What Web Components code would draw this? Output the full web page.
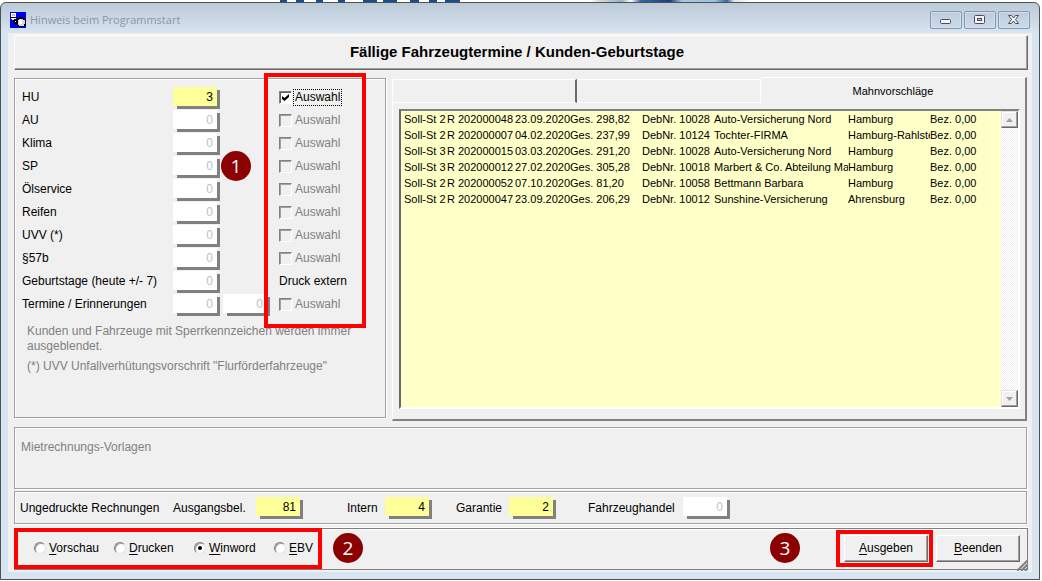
<!DOCTYPE html>
<html lang="de">
<head>
<meta charset="utf-8">
<title>Hinweis beim Programmstart</title>
<style>
html,body{margin:0;height:100%}
body{background:#fff;font:12px/16px "Liberation Sans",Arial,sans-serif;color:#000;--face:#f0f0f0;overflow:hidden}
</style>
</head>
<body>
<start-dialog></start-dialog>
<script>
function define(name, html, init){
  const t=document.createElement('template');
  t.innerHTML=html;
  customElements.define(name,class extends HTMLElement{
    connectedCallback(){
      if(this.shadowRoot)return;
      this.attachShadow({mode:'open'}).append(t.content.cloneNode(true));
      if(init)init(this,this.shadowRoot);
    }
  });
}

/* Numbered callout disc */
define('call-out',`<style>
:host{display:flex;align-items:center;justify-content:center;width:30px;height:30px;border-radius:50%;background:#8b0000;color:#fff;font:19px/30px "Open Sans","Noto Sans",sans-serif}
</style><slot></slot>`);

/* Count field with hard drop shadow */
define('count-field',`<style>
:host{display:block;width:44px;height:22px;position:relative}
:host::before{content:"";position:absolute;left:4px;top:3px;right:-3px;bottom:0;background:#808080}
input{position:relative;display:block;box-sizing:border-box;width:44px;height:19px;margin:0;border:0;padding:0 4px;font:inherit;text-align:right;background:#fff;color:#c0c0c0;border-radius:0;outline:0}
:host([filled]) input{background:#ffff99;color:#000}
</style><input readonly>`,(h,r)=>{
  const i=r.querySelector('input');
  i.value=h.getAttribute('value');
  i.setAttribute('aria-label',h.getAttribute('label'));
});

/* Sunken tick box with caption */
define('tick-box',`<style>
:host{display:block}
label{display:flex;align-items:center;gap:1px;color:#808080}
input{appearance:none;flex:none;box-sizing:border-box;width:13px;height:13px;margin:0;border:1px solid;border-color:#808080 #fff #fff #808080;box-shadow:inset 1px 1px 0 #a0a0a0;display:grid;place-items:center}
input:checked{background:#fff;box-shadow:inset 1px 1px 0 #606060}
input:checked::after{content:"";width:9px;height:9px;background:#000;clip-path:polygon(11% 33%,39% 56%,89% 11%,89% 44%,39% 89%,11% 67%)}
span{padding:0 1px;border:1px solid transparent;line-height:15px}
:host([checked]) label{color:#000}
:host([checked]) span{border:1px dotted #000}
</style><label><input type="checkbox"><span><slot></slot></span></label>`,(h,r)=>{
  const i=r.querySelector('input');
  i.checked=h.hasAttribute('checked');
  i.disabled=!i.checked;
});

/* Radio group */
define('output-choice',`<style>
:host{display:flex;align-items:center}
label{display:flex;align-items:center;gap:3px;width:80px}
input{appearance:none;box-sizing:border-box;width:12px;height:12px;margin:0;border:1px solid;border-color:#808080 #e3e3e3 #e3e3e3 #808080;border-radius:50%;background:#fff;box-shadow:inset 1px 1px 0 #a0a0a0;display:grid;place-items:center}
input:checked::after{content:"";width:4px;height:4px;border-radius:50%;background:#000}
label:last-child{width:auto}
u{text-underline-offset:2px}
</style>
<label><input type="radio" name="o"><span><u>V</u>orschau</span></label>
<label><input type="radio" name="o"><span><u>D</u>rucken</span></label>
<label><input type="radio" name="o" checked><span><u>W</u>inword</span></label>
<label><input type="radio" name="o"><span><u>E</u>BV</span></label>`);

/* Raised push button */
define('push-button',`<style>
:host{display:block}
button{display:block;box-sizing:border-box;width:84px;height:27px;margin:0;padding:0;font:inherit;color:#000;background:var(--face);border:1px solid;border-color:#fff #696969 #696969 #fff;box-shadow:inset -1px -1px 0 #a0a0a0;border-radius:0}
</style><button type="button"><slot></slot></button>`);

/* Etched group frame */
define('group-frame',`<style>
:host{display:block;box-sizing:border-box;border:1px solid #a0a0a0;box-shadow:inset 1px 1px 0 #fff,1px 1px 0 #fff}
</style><slot></slot>`);

/* Title bar */
define('title-bar',`<style>
:host{display:flex;align-items:center;box-sizing:border-box;height:30px;padding:4px 9px 0;color:#8f969e;font:11px/16px "Open Sans","Noto Sans",sans-serif}
svg{display:block}
.ico{margin-right:4px}
h1{flex:1;margin:0;font:inherit}
.b{display:flex;gap:2px}
button{display:flex;align-items:center;justify-content:center;box-sizing:border-box;width:32px;height:18px;padding:0;border:1px solid #8497b0;border-radius:2px;background:linear-gradient(#bccbdb,#cddaea);box-shadow:inset 0 0 0 1px #d3e0ee}
</style>
<svg class="ico" width="16" height="16" viewBox="0 0 16 16" shape-rendering="crispEdges"><path fill="#0000f0" d="M0 0h16v16H0z"/><path fill="#fff" d="M1 1h5v1H1zM1 2h1v3H1zM5 2h1v3H5zM2 4h3v1H2z"/><path fill="#c0c0c0" d="M2 2h3v2H2z"/><path fill="#000" d="M0 5h7v1H0zM3 8h5v1H3zM4 9h3v3H4zM6 11h2v2H6zM14 13h2v1h-2z"/><path fill="#fff" d="M1 6h5v1H1zM5 9h2v1H5zM2 7h2v1H2z"/><path fill="#000" d="M9 5h4v1h2v2h1v5h-1v1h-2v1H9v-1H7v-3H6V8h1V6h2z"/><path fill="#d8d8d8" d="M9 7h4v1h2v4h-1v2H9v-1H8V8h1z"/><path fill="#fff" d="M9 8h3v4H9z"/><path fill="#000" d="M9 6h1v1H9zM12 6h1v1h-1z"/></svg>
<h1>Hinweis beim Programmstart</h1>
<div class="b">
<button aria-label="Minimieren"><svg width="12" height="12"><rect x=".5" y="5.500" width="10" height="4" rx="1" fill="#f4f4f4" stroke="#4a4d5c"/></svg></button>
<button aria-label="Maximieren"><svg width="12" height="12"><rect x=".5" y="1.500" width="10" height="8" rx="1" fill="#f4f4f4" stroke="#4a4d5c"/><rect x="3.500" y="4.500" width="4" height="2" fill="#b9c8d8" stroke="#4a4d5c"/></svg></button>
<button aria-label="Schließen"><svg width="12" height="12"><path d="M.5 1.500h3L5.500 4l2-2.500h3L7.500 5.500l3 4h-3L5.500 7l-2 2.500h-3l3-4z" fill="#f4f4f4" stroke="#4a4d5c"/></svg></button>
</div>`);

/* Due dates panel */
define('due-list',`<style>
:host{display:block;padding:8px 7px 0}
.g{position:relative;display:grid;grid-template-columns:151px 50px 56px 1fr;grid-auto-rows:23px;align-items:start}
.g>span,tick-box{margin-top:2px}
.g>span{white-space:nowrap}
tick-box{grid-column:4}
.w{grid-column:4}
.mark{position:absolute;left:242px;top:-14px;width:102px;height:255px;box-sizing:border-box;border:4px solid #f00}
call-out{position:absolute;left:199px;top:64px}
p{margin:7px 0 5px 5px;line-height:15px;color:#808080;max-width:340px}
p+p{margin:0 0 0 5px}
</style><div class="g"></div>
<p>Kunden und Fahrzeuge mit Sperrkennzeichen werden immer ausgeblendet.</p><p>(*) UVV Unfallverhütungsvorschrift "Flurförderfahrzeuge"</p>`,(h,r)=>{
  const names=['HU','AU','Klima','SP','Ölservice','Reifen','UVV (*)','§57b','Geburtstage (heute +/- 7)','Termine / Erinnerungen'];
  r.querySelector('.g').innerHTML=names.map((n,i)=>`<span>${n}</span><count-field label="${n}" ${i?'value="0"':'value="3" filled'}></count-field>`+
    (i==9?`<count-field label="Erinnerungen" value="0"></count-field>`:'')+
    (i==8?'<span class="w">Druck extern</span>':`<tick-box ${i?'':'checked'}>Auswahl</tick-box>`)).join('')+'<div class="mark"></div><call-out>1</call-out>';
});

/* Tab sheet with the reminder list */
define('reminder-tabs',`<style>
:host{display:flex;flex-direction:column}
.tabs{display:flex;height:25px;align-items:flex-end}
.t{box-sizing:border-box;height:24px;flex:183 1 0;border:1px solid #fff;border-width:1px 0 1px 1px;border-radius:3px 0 0 0;padding:0;background:none;margin:0}
.t.a{border-right:2px solid #696969}
.t.b{border-left:0;border-right:1px solid #fff}
.t.s{height:26px;flex:265 1 0;font:11px/22px "Liberation Sans",Arial,sans-serif;color:#000;border-width:1px 2px 0 0;border-right-color:#808080;border-radius:0}
.sheet{flex:1;display:flex;border:solid;border-width:0 2px 2px 1px;border-color:#fff #808080 #808080 #fff;padding:6px 5px 10px 6px}
.box{flex:1;display:flex;box-sizing:border-box;border:2px solid;border-color:#808080 #fff #fff #696969;background:#ffffc8;overflow:hidden}
.rows{flex:1;min-width:0}
table{border-collapse:collapse;table-layout:fixed;width:100%;font-size:11px;line-height:16px}
td{padding:0;white-space:nowrap;overflow:hidden}
td:first-child{padding-left:3px}
.sb{width:17px;display:flex;flex-direction:column;justify-content:space-between;background:repeating-conic-gradient(#fff 0 25%,#f0f0f0 0 50%) 0 0/2px 2px}
.sb button{width:17px;height:17px;padding:0;display:grid;place-items:center;background:var(--face);border:1px solid;border-color:#e3e3e3 #696969 #696969 #e3e3e3;box-shadow:inset -1px -1px 0 #a0a0a0,inset 1px 1px 0 #fff;border-radius:0}
</style>
<div class="tabs" role="tablist"><button class="t a" role="tab" aria-label="Liste 1"></button><button class="t b" role="tab" aria-label="Liste 2"></button><button class="t s" role="tab" aria-selected="true">Mahnvorschläge</button></div>
<div class="sheet"><div class="box"><div class="rows"><table><colgroup><col style="width:46px"><col style="width:68px"><col style="width:55px"><col style="width:72px"><col style="width:72px"><col style="width:134px"><col style="width:82px"><col></colgroup><tbody></tbody></table></div>
<div class="sb"><button aria-label="Nach oben"><svg width="7" height="4"><path fill="#a0a0a0" d="M0 4 3.500 0 7 4z"/></svg></button><button aria-label="Nach unten"><svg width="7" height="4"><path fill="#a0a0a0" d="M0 0h7L3.500 4z"/></svg></button></div></div></div>`,(h,r)=>{
  r.querySelector('tbody').innerHTML=[
   ['Soll-St 2','R 202000048','23.09.2020','298,82','10028','Auto-Versicherung Nord','Hamburg'],
   ['Soll-St 2','R 202000007','04.02.2020','237,99','10124','Tochter-FIRMA','Hamburg-Rahlste'],
   ['Soll-St 3','R 202000015','03.03.2020','291,20','10028','Auto-Versicherung Nord','Hamburg'],
   ['Soll-St 3','R 202000012','27.02.2020','305,28','10018','Marbert &amp; Co. Abteilung Mas','Hamburg'],
   ['Soll-St 2','R 202000052','07.10.2020','81,20','10058','Bettmann Barbara','Hamburg'],
   ['Soll-St 2','R 202000047','23.09.2020','206,29','10012','Sunshine-Versicherung','Ahrensburg']
  ].map(a=>`<tr><td>${a[0]}<td>${a[1]}<td>${a[2]}<td>Ges. ${a[3]}<td>DebNr. ${a[4]}<td>${a[5]}<td>${a[6]}<td>Bez. 0,00</tr>`).join('');
});

/* Unprinted invoices */
define('invoice-counts',`<style>
:host{display:flex;align-items:flex-start;padding:5px}
span{margin-top:3px;white-space:nowrap}
.a{flex:0 0 153px}
.b{flex:0 0 83px}
.c{flex:0 0 38px;margin-left:47px}
.d{flex:0 0 53px;margin-left:27px}
.e{flex:0 0 95px;margin-left:35px}
</style>
<span class="a">Ungedruckte Rechnungen</span><span class="b">Ausgangsbel.</span><count-field label="Ausgangsbel." value="81" filled></count-field>
<span class="c">Intern</span><count-field label="Intern" value="4" filled></count-field>
<span class="d">Garantie</span><count-field label="Garantie" value="2" filled></count-field>
<span class="e">Fahrzeughandel</span><count-field label="Fahrzeughandel" value="0"></count-field>`);

/* Bottom action bar */
define('action-bar',`<style>
:host{position:relative;display:flex;align-items:center;box-sizing:border-box;height:42px;border:1px solid #808080;box-shadow:inset 1px 1px 0 #fff,0 -1px 0 #fff;padding:0 7px 2px 0}
.l,.r{box-sizing:border-box;border:4px solid #f00;margin-left:-1px;display:flex;align-items:center}
.l{width:308px;height:41px;padding-left:16px;margin-right:11px}
.r{height:37px;margin:0 3px 0 36px;padding-left:4px;width:97px}
.s{flex:1}
svg{position:absolute;right:-1px;bottom:-2px}
u{text-underline-offset:2px}
</style>
<div class="l"><output-choice></output-choice></div><call-out>2</call-out><div class="s"></div><call-out>3</call-out>
<div class="r"><push-button><u>A</u>usgeben</push-button></div><push-button><u>B</u>eenden</push-button>
<svg width="11" height="11"><path d="M0 11 11 0M4 11l7-7M8 11l3-3" stroke="#808080" stroke-width="2"/></svg>`);

define('start-dialog',`<style>
:host{display:flex;flex-direction:column;box-sizing:border-box;height:100vh;padding:2px 2px 1px 0;background:linear-gradient(90deg,transparent 590px,#d8d8d0 600px,#8fb4cc 622px,#fff 631px,#2f66a8 641px,#1c3f80 670px,#a4c8de 682px,#9cc4dc 715px,#2a68a8 727px,#e4e0d4 734px,#fff 750px) 0 0/100% 2px no-repeat,linear-gradient(90deg,#fff 280px,#174f8c 280px 287px,#fff 287px 296px,#174f8c 296px 304px,#fff 304px 316px,#174f8c 316px 323px,#fff 323px 338px,#174f8c 338px 345px,#fff 345px 363px,#174f8c 363px 377px,#fff 377px 383px,#174f8c 383px 397px,#fff 397px 410px,#174f8c 410px 419px,#fff 419px 429px,#174f8c 429px 437px,#fff 437px 445px,#174f8c 445px 460px,#fff 460px) 0 0/100% 2px no-repeat,#fff}
.win{flex:1;display:flex;flex-direction:column;border:1px solid #505050;border-radius:6px 6px 0 0;background:linear-gradient(#bccad8,#d7e4f2 30px)}
.client{flex:1;display:flex;flex-direction:column;margin:0 7px 7px;padding:2px 5px 2px 6px;background:var(--face)}
h2{margin:0 -1px 0 0;padding-right:8px;height:33px;font:bold 15px/32px "Liberation Sans",Arial,sans-serif;text-align:center;border:1px solid;border-color:#fff #696969 #696969 #fff;box-shadow:inset -1px -1px 0 #a0a0a0}
.mid{flex:1;display:flex;gap:6px;margin:8px 0 6px}
.mid group-frame{flex:0 0 372px;margin-bottom:3px}
reminder-tabs{flex:1}
.m{height:62px;padding:11px 6px;color:#808080}
.i{height:33px;margin:2px 0 4px}
action-bar{margin-right:-1px}
</style>
<div class="win"><title-bar></title-bar><div class="client">
<h2>Fällige Fahrzeugtermine / Kunden-Geburtstage</h2>
<div class="mid"><group-frame><due-list></due-list></group-frame><reminder-tabs></reminder-tabs></div>
<group-frame class="m">Mietrechnungs-Vorlagen</group-frame>
<group-frame class="i"><invoice-counts></invoice-counts></group-frame>
<action-bar></action-bar>
</div></div>`);
</script>
</body>
</html>
